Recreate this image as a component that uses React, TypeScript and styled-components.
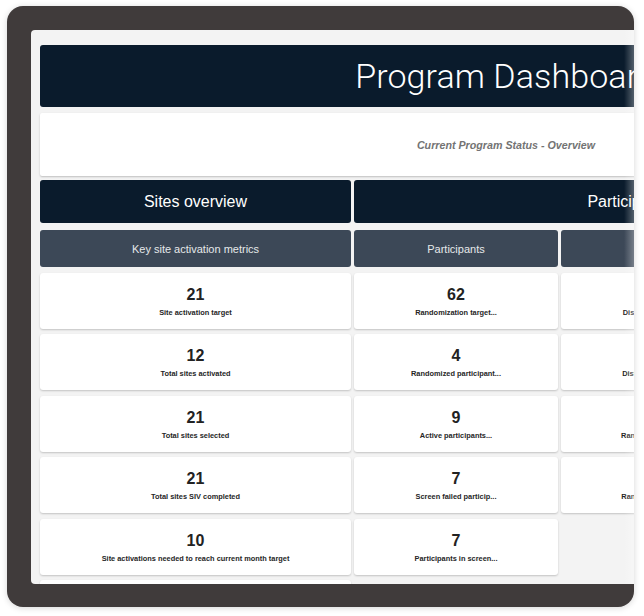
import React from "react";
import styled, { createGlobalStyle } from "styled-components";

const GlobalStyle = createGlobalStyle`
  html, body {
    margin: 0;
    padding: 0;
    background: #ffffff;
    font-family: "Liberation Sans", Arial, sans-serif;
  }
`

const Page = styled.div`
  width: 644px;
  height: 616px;
  padding: 6px 0 0 7px;
  box-sizing: border-box;
  overflow: hidden;
`

const DeviceFrame = styled.div`
  width: 627px;
  height: 601px;
  box-sizing: border-box;
  padding: 24px 0 23px 24px;
  background: #403b3b;
  border-radius: 16px;
  box-shadow: 0 1px 6px rgba(0, 0, 0, 0.16);
  overflow: hidden;
`

const Screen = styled.div`
  position: relative;
  height: 100%;
  background: #f3f3f3;
  border-radius: 4px 0 0 4px;
  padding: 15px 0 0 9px;
  box-sizing: border-box;
  overflow: hidden;
`

// soft light edge where the screen runs out of the frame
const EdgeFade = styled.div`
  position: absolute;
  top: 0;
  right: 0;
  bottom: 0;
  width: 10px;
  background: linear-gradient(90deg, rgba(255, 255, 255, 0) 0%, rgba(255, 255, 255, 0.3) 100%);
  pointer-events: none;
`

const Dashboard = styled.div`
  width: 932px;
  display: flex;
  flex-direction: column;
`

const TitleBar = styled.div`
  height: 62px;
  background: #0a1b2c;
  border-radius: 3px;
  display: flex;
  align-items: center;
  justify-content: center;
  color: #ffffff;
  font-family: Roboto, "Liberation Sans", sans-serif;
  font-weight: 300;
  font-size: 34px;
  letter-spacing: 0.1px;
`

const StatusPanel = styled.div`
  margin-top: 6px;
  height: 63px;
  background: #ffffff;
  border-radius: 2px;
  box-shadow: 0 1px 2px rgba(0, 0, 0, 0.22);
  display: flex;
  align-items: center;
  justify-content: center;
  color: #737373;
  font-style: italic;
  font-weight: bold;
  font-size: 10.7px;
`

const Grid = styled.div`
  margin-top: 4px;
  display: grid;
  grid-template-columns: 311px 204px 204px 204px;
  column-gap: 3px;
  row-gap: 5.5px;
`

const SectionHeader = styled.div<{ $span?: string }>`
  grid-column: ${(p) => p.$span || "auto"};
  height: 43px;
  background: #0a1b2c;
  border-radius: 3px;
  display: flex;
  align-items: center;
  justify-content: center;
  color: #ffffff;
  font-size: 16px;
`

const SubHeader = styled.div`
  margin-top: 1.5px;
  height: 37px;
  background: #3c4857;
  border-radius: 3px;
  display: flex;
  align-items: center;
  justify-content: center;
  color: #e6e8ea;
  font-size: 11px;
`

const Card = styled.div`
  height: 56px;
  background: #ffffff;
  border-radius: 3px;
  box-shadow: 0 1px 2px rgba(0, 0, 0, 0.2);
  display: flex;
  flex-direction: column;
  align-items: center;
  justify-content: center;
  gap: 4px;
  padding-top: 1px;
  box-sizing: border-box;
`

const EmptyCell = styled.div`
  height: 56px;
`

const Value = styled.div`
  color: #222222;
  font-weight: bold;
  font-size: 16px;
  line-height: 18px;
`

const Label = styled.div`
  color: #262626;
  font-weight: bold;
  font-size: 7.4px;
  line-height: 9px;
`

type Metric = { value: string; label: string } | null

const rows: Metric[][] = [
  [
    { value: "21", label: "Site activation target" },
    { value: "62", label: "Randomization target..." },
    { value: "18", label: "Distance visits target..." },
    { value: "5", label: "Distance visits planned" },
  ],
  [
    { value: "12", label: "Total sites activated" },
    { value: "4", label: "Randomized participant..." },
    { value: "3", label: "Distance visits compl..." },
    { value: "2", label: "Distance visits pending" },
  ],
  [
    { value: "21", label: "Total sites selected" },
    { value: "9", label: "Active participants..." },
    { value: "2", label: "Randomized this month" },
    { value: "1", label: "Randomized last week" },
  ],
  [
    { value: "21", label: "Total sites SIV completed" },
    { value: "7", label: "Screen failed particip..." },
    { value: "1", label: "Randomized last month" },
    null,
  ],
  [
    { value: "10", label: "Site activations needed to reach current month target" },
    { value: "7", label: "Participants in screen..." },
    null,
    null,
  ],
  [
    { value: "3", label: "Site activations needed next month" },
    null,
    null,
    null,
  ],
]

export default function App() {
  return (
    <>
      <GlobalStyle />
      <Page>
        <DeviceFrame>
          <Screen>
            <Dashboard>
              <TitleBar>Program Dashboard</TitleBar>
              <StatusPanel>Current Program Status - Overview</StatusPanel>
              <Grid>
                <SectionHeader>Sites overview</SectionHeader>
                <SectionHeader $span="2 / 5">Participants overview</SectionHeader>

                <SubHeader>Key site activation metrics</SubHeader>
                <SubHeader>Participants</SubHeader>
                <SubHeader>Visits</SubHeader>
                <SubHeader>Enrollment</SubHeader>

                {rows.map((row, i) =>
                  row.map((m, j) =>
                    m ? (
                      <Card key={`${i}-${j}`}>
                        <Value>{m.value}</Value>
                        <Label>{m.label}</Label>
                      </Card>
                    ) : (
                      <EmptyCell key={`${i}-${j}`} />
                    )
                  )
                )}
              </Grid>
            </Dashboard>
            <EdgeFade />
          </Screen>
        </DeviceFrame>
      </Page>
    </>
  );
}
